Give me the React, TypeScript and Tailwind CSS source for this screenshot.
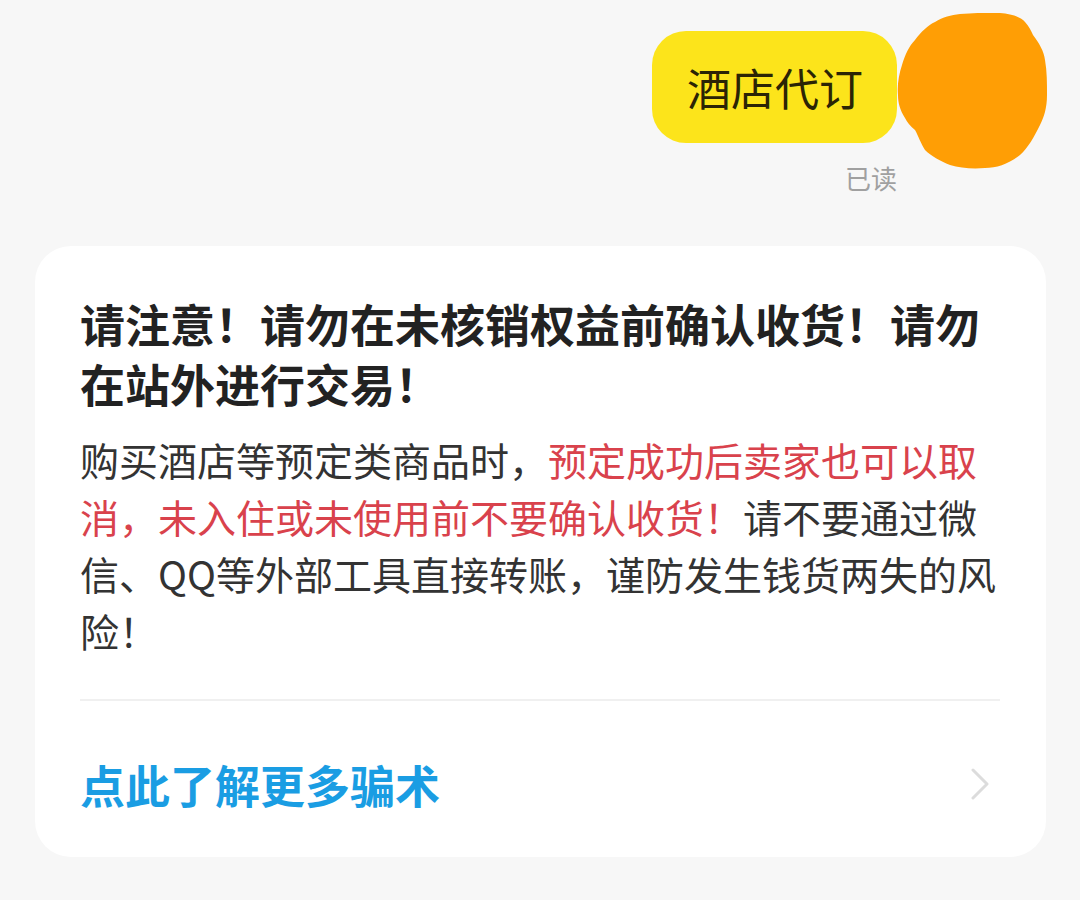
const font = { fontFamily: '"Noto Sans CJK SC", "Noto Sans", sans-serif' }

function Avatar() {
  return (
    <svg width="150" height="156" viewBox="0 0 150 156" className="shrink-0">
      <path
        d="M63 1 C80 0 95 -1 103 0 C115 1 124 4 128 9 C132 13 134 18 136 22 C142 30 147 38 148 47 C150 58 150 70 150 82 C150 95 147 104 143 112 C137 124 131 135 123 142 C112 151 100 155 88 155 C75 156 63 155 53 152 C43 148 34 143 28 137 C24 131 21 122 18 117 C13 113 10 109 8 105 C3 97 1 90 1 82 C0 72 2 61 5 52 C8 42 12 33 18 27 C24 19 31 12 38 9 C46 4 54 2 63 1 Z"
        fill="#ff9e05"
      />
    </svg>
  )
}

function Chevron() {
  return (
    <svg width="20" height="32" viewBox="0 0 20 32" className="mr-[10px]">
      <path d="M3 2 L17 16 L3 30" fill="none" stroke="#dcdcdc" strokeWidth="3" strokeLinecap="round" strokeLinejoin="round" />
    </svg>
  )
}

export default function App() {
  return (
    <div className="min-h-screen w-[1080px] bg-[#f7f7f7] pb-10" style={font}>
      {/* my message */}
      <div className="flex justify-end items-start pt-[13px] pr-[33px]">
        <div className="flex flex-col items-end">
          <div className="mt-[18px] h-[112px] rounded-[34px] bg-[#fce41b] pl-[35px] pr-[34px] flex items-center">
            <span className="text-[44px] leading-none text-[#2b2405]">酒店代订</span>
          </div>
          <div className="mt-[20px] text-[26px] leading-[30px] text-[#a0a0a0]">已读</div>
        </div>
        <Avatar />
      </div>

      {/* warning card */}
      <div className="mt-[53px] ml-[35px] w-[1011px] rounded-[36px] bg-white pl-[45px] pr-[46px] pt-[48px]">
        <h2 className="text-[45px] leading-[60px] font-bold text-[#222222]">
          请注意！请勿在未核销权益前确认收货！请勿在站外进行交易！
        </h2>
        <p className="mt-[17px] text-[39px] leading-[57px] text-[#333333]">
          购买酒店等预定类商品时，
          <span className="text-[#d9424c]">预定成功后卖家也可以取消，未入住或未使用前不要确认收货！</span>
          请不要通过微信、QQ等外部工具直接转账，谨防发生钱货两失的风险！
        </p>
        <div className="mt-[40px] h-[2px] bg-[#f0f0f0]" />
        <div className="flex items-center justify-between h-[156px] pt-[10px]">
          <span className="text-[45px] font-bold text-[#1a9de3] leading-none">点此了解更多骗术</span>
          <Chevron />
        </div>
      </div>
    </div>
  )
}
